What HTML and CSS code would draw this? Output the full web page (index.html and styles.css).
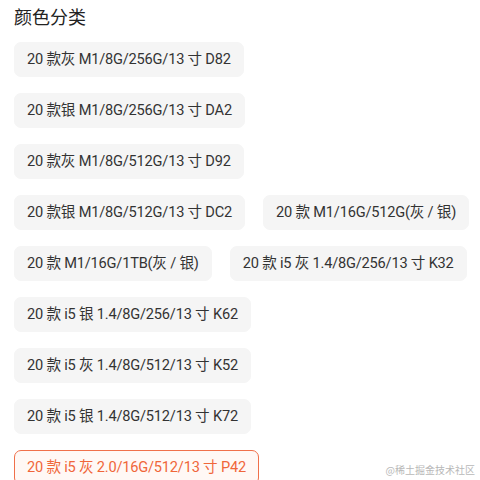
FILE: index.html
```html
<!DOCTYPE html>
<html lang="zh">
<head>
<meta charset="utf-8">
<link rel="stylesheet" href="styles.css">
</head>
<body>
<div class="page">
  <h2 class="title">颜色分类</h2>
  <div class="rows">
    <div class="row"><span class="chip">20 款灰 M1/8G/256G/13 寸 D82</span></div>
    <div class="row"><span class="chip">20 款银 M1/8G/256G/13 寸 DA2</span></div>
    <div class="row"><span class="chip">20 款灰 M1/8G/512G/13 寸 D92</span></div>
    <div class="row"><span class="chip">20 款银 M1/8G/512G/13 寸 DC2</span><span class="chip">20 款 M1/16G/512G(灰 / 银)</span></div>
    <div class="row"><span class="chip">20 款 M1/16G/1TB(灰 / 银)</span><span class="chip">20 款 i5 灰 1.4/8G/256/13 寸 K32</span></div>
    <div class="row"><span class="chip">20 款 i5 银 1.4/8G/256/13 寸 K62</span></div>
    <div class="row"><span class="chip">20 款 i5 灰 1.4/8G/512/13 寸 K52</span></div>
    <div class="row"><span class="chip">20 款 i5 银 1.4/8G/512/13 寸 K72</span></div>
    <div class="row"><span class="chip active">20 款 i5 灰 2.0/16G/512/13 寸 P42</span></div>
  </div>
</div>
<div class="watermark">@稀土掘金技术社区</div>
</body>
</html>
```

FILE: styles.css
```css
html, body {
  margin: 0;
  padding: 0;
  background: #ffffff;
  overflow: hidden;
  height: 480px;
}
body {
  font-family: Roboto, "Noto Sans CJK SC", sans-serif;
  color: #333333;
  position: relative;
}
.page {
  padding: 6px 14px 0 14px;
}
.title {
  margin: 0 0 12px 0;
  font-size: 18px;
  font-weight: 400;
  line-height: 24px;
  color: #222222;
}
.rows {
  display: flex;
  flex-direction: column;
  gap: 16px;
}
.row {
  display: flex;
  gap: 18px;
}
.chip {
  box-sizing: border-box;
  height: 35px;
  line-height: 33px;
  padding: 0 12px;
  border: 1px solid #f5f5f5;
  border-radius: 7px;
  background: #f5f5f5;
  font-size: 14.6px;
  letter-spacing: -0.2px;
  color: #333333;
  white-space: nowrap;
}
.chip.active {
  border-color: #f0704a;
  background: #fff8f5;
  color: #f0663a;
}
.watermark {
  position: absolute;
  right: 5px;
  bottom: 3px;
  font-size: 10px;
  color: #b8b8b8;
  font-family: "Noto Sans CJK SC", sans-serif;
}
```
